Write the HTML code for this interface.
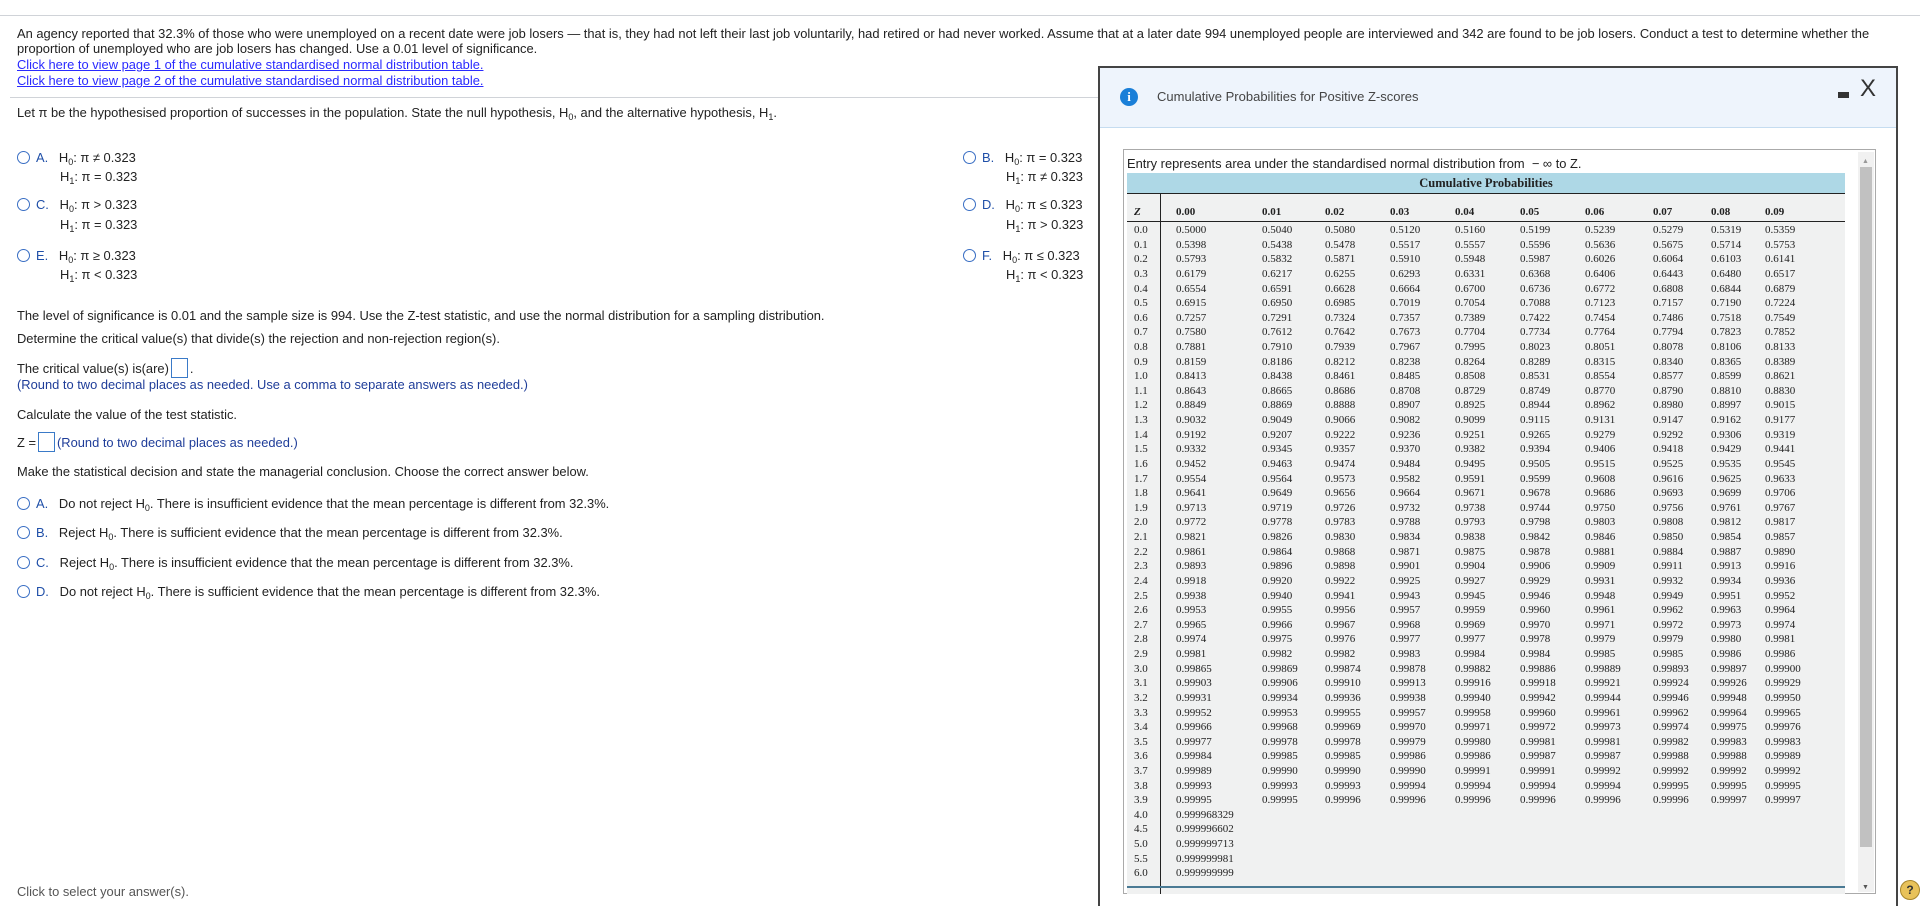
<!DOCTYPE html>
<html><head><meta charset="utf-8"><style>
body{margin:0;width:1920px;height:895px;overflow:hidden;background:#fff;font-family:"Liberation Sans",Arial,sans-serif;color:#222;position:relative}
.a{position:absolute;white-space:nowrap;font-size:12.9px;line-height:15px}
.lk{color:#2a2aff;text-decoration:underline}
.hint{color:#1f3d99}
.rad{display:inline-block;width:11px;height:11px;border:1px solid #3a6fc4;border-radius:50%;vertical-align:-2px;margin-right:6px}
.lt{color:#1f4fa8}
sub{font-size:9px;vertical-align:-3px;line-height:0}
.box{display:inline-block;width:15px;height:18px;border:1px solid #3a7ac8;vertical-align:-5px;margin:0 2px}
.r{position:absolute;left:1134px;display:grid;grid-template-columns:42px 86px 63px 65px 65px 65px 65px 68px 58px 54px 80px;height:14px;line-height:14px;font-family:"Liberation Serif",serif;font-size:11px;color:#222}
</style></head><body>
<div style="position:absolute;left:0;top:15px;width:1920px;height:1px;background:#d0d3d8"></div>
<div class="a" style="left:17px;top:26px">An agency reported that 32.3% of those who were unemployed on a recent date were job losers — that is, they had not left their last job voluntarily, had retired or had never worked. Assume that at a later date 994 unemployed people are interviewed and 342 are found to be job losers. Conduct a test to determine whether the</div>
<div class="a" style="left:17px;top:41px">proportion of unemployed who are job losers has changed. Use a 0.01 level of significance.</div>
<div class="a lk" style="left:17px;top:57px">Click here to view page 1 of the cumulative standardised normal distribution table.</div>
<div class="a lk" style="left:17px;top:73px">Click here to view page 2 of the cumulative standardised normal distribution table.</div>
<div style="position:absolute;left:10px;top:97px;width:1090px;height:1px;background:#d0d3d8"></div>
<div class="a" style="left:17px;top:105px">Let π be the hypothesised proportion of successes in the population. State the null hypothesis, H<sub>0</sub>, and the alternative hypothesis, H<sub>1</sub>.</div>

<div class="a" style="left:17px;top:150px"><span class="rad"></span><span class="lt">A.</span>&nbsp;&nbsp; H<sub>0</sub>: π ≠ 0.323</div>
<div class="a" style="left:60px;top:169px">H<sub>1</sub>: π = 0.323</div>
<div class="a" style="left:17px;top:197px"><span class="rad"></span><span class="lt">C.</span>&nbsp;&nbsp; H<sub>0</sub>: π &gt; 0.323</div>
<div class="a" style="left:60px;top:217px">H<sub>1</sub>: π = 0.323</div>
<div class="a" style="left:17px;top:248px"><span class="rad"></span><span class="lt">E.</span>&nbsp;&nbsp; H<sub>0</sub>: π ≥ 0.323</div>
<div class="a" style="left:60px;top:267px">H<sub>1</sub>: π &lt; 0.323</div>
<div class="a" style="left:963px;top:150px"><span class="rad"></span><span class="lt">B.</span>&nbsp;&nbsp; H<sub>0</sub>: π = 0.323</div>
<div class="a" style="left:1006px;top:169px">H<sub>1</sub>: π ≠ 0.323</div>
<div class="a" style="left:963px;top:197px"><span class="rad"></span><span class="lt">D.</span>&nbsp;&nbsp; H<sub>0</sub>: π ≤ 0.323</div>
<div class="a" style="left:1006px;top:217px">H<sub>1</sub>: π &gt; 0.323</div>
<div class="a" style="left:963px;top:248px"><span class="rad"></span><span class="lt">F.</span>&nbsp;&nbsp; H<sub>0</sub>: π ≤ 0.323</div>
<div class="a" style="left:1006px;top:267px">H<sub>1</sub>: π &lt; 0.323</div>

<div class="a" style="left:17px;top:308px">The level of significance is 0.01 and the sample size is 994. Use the Z-test statistic, and use the normal distribution for a sampling distribution.</div>
<div class="a" style="left:17px;top:331px">Determine the critical value(s) that divide(s) the rejection and non-rejection region(s).</div>
<div class="a" style="left:17px;top:358px">The critical value(s) is(are)<span class="box"></span>.</div>
<div class="a hint" style="left:17px;top:377px">(Round to two decimal places as needed. Use a comma to separate answers as needed.)</div>
<div class="a" style="left:17px;top:407px">Calculate the value of the test statistic.</div>
<div class="a" style="left:17px;top:432px">Z =<span class="box"></span><span class="hint">(Round to two decimal places as needed.)</span></div>
<div class="a" style="left:17px;top:464px">Make the statistical decision and state the managerial conclusion. Choose the correct answer below.</div>
<div class="a" style="left:17px;top:496px"><span class="rad"></span><span class="lt">A.</span>&nbsp;&nbsp; Do not reject H<sub>0</sub>. There is insufficient evidence that the mean percentage is different from 32.3%.</div>
<div class="a" style="left:17px;top:525px"><span class="rad"></span><span class="lt">B.</span>&nbsp;&nbsp; Reject H<sub>0</sub>. There is sufficient evidence that the mean percentage is different from 32.3%.</div>
<div class="a" style="left:17px;top:555px"><span class="rad"></span><span class="lt">C.</span>&nbsp;&nbsp; Reject H<sub>0</sub>. There is insufficient evidence that the mean percentage is different from 32.3%.</div>
<div class="a" style="left:17px;top:584px"><span class="rad"></span><span class="lt">D.</span>&nbsp;&nbsp; Do not reject H<sub>0</sub>. There is sufficient evidence that the mean percentage is different from 32.3%.</div>
<div class="a" style="left:17px;top:884px;color:#555">Click to select your answer(s).</div>

<!-- dialog -->
<div style="position:absolute;left:1098px;top:66px;width:800px;height:840px;background:#fff;border:2px solid #444;border-bottom:none;box-sizing:border-box"></div>
<div style="position:absolute;left:1100px;top:68px;width:796px;height:59px;background:#eef4fc;border-bottom:1px solid #c5dcf0"></div>
<div style="position:absolute;left:1120px;top:88px;width:18px;height:18px;border-radius:50%;background:#1a7fd8;color:#fff;font:bold 13px/18px 'Liberation Serif',serif;text-align:center">i</div>
<div class="a" style="left:1157px;top:89px;font-size:13px;color:#444">Cumulative Probabilities for Positive Z-scores</div>
<div style="position:absolute;left:1838px;top:92px;width:11px;height:6px;background:#333"></div>
<div class="a" style="left:1860px;top:77px;font-size:24px;line-height:24px;color:#333">X</div>

<div style="position:absolute;left:1123px;top:149px;width:753px;height:745px;border:1px solid #aaa;box-sizing:border-box;background:#fff"></div>
<div style="position:absolute;left:1858px;top:152px;width:16px;height:740px;background:#f1f1f1"></div>
<div style="position:absolute;left:1860px;top:167px;width:12px;height:680px;background:#c1c1c1"></div>
<div class="a" style="left:1862px;top:154px;font-size:7px;color:#999">▲</div>
<div class="a" style="left:1862px;top:880px;font-size:7px;color:#555">▼</div>
<div class="a" style="left:1127px;top:156px;font-size:12.9px;color:#222">Entry represents area under the standardised normal distribution from &nbsp;− ∞ to Z.</div>
<div style="position:absolute;left:1127px;top:173px;width:718px;height:20px;background:#aed8e6;border-bottom:1px solid #222;text-align:center;font:bold 12.5px/20px 'Liberation Serif',serif;color:#222">Cumulative Probabilities</div>
<div style="position:absolute;left:1127px;top:194px;width:718px;height:700px;background:#f0f1f1"></div>
<div style="position:absolute;left:1127px;top:221px;width:718px;height:1px;background:#222"></div>
<div style="position:absolute;left:1160px;top:194px;width:1px;height:700px;background:#222"></div>
<div style="position:absolute;left:1127px;top:886px;width:718px;height:2px;background:#4a7a94"></div>
<div class="r" style="top:205px;font-weight:bold"><span style="font-style:italic">Z</span><span>0.00</span><span>0.01</span><span>0.02</span><span>0.03</span><span>0.04</span><span>0.05</span><span>0.06</span><span>0.07</span><span>0.08</span><span>0.09</span></div>
<div id="rows"></div>
<script>
var d=`0.0 5000 5040 5080 5120 5160 5199 5239 5279 5319 5359
0.1 5398 5438 5478 5517 5557 5596 5636 5675 5714 5753
0.2 5793 5832 5871 5910 5948 5987 6026 6064 6103 6141
0.3 6179 6217 6255 6293 6331 6368 6406 6443 6480 6517
0.4 6554 6591 6628 6664 6700 6736 6772 6808 6844 6879
0.5 6915 6950 6985 7019 7054 7088 7123 7157 7190 7224
0.6 7257 7291 7324 7357 7389 7422 7454 7486 7518 7549
0.7 7580 7612 7642 7673 7704 7734 7764 7794 7823 7852
0.8 7881 7910 7939 7967 7995 8023 8051 8078 8106 8133
0.9 8159 8186 8212 8238 8264 8289 8315 8340 8365 8389
1.0 8413 8438 8461 8485 8508 8531 8554 8577 8599 8621
1.1 8643 8665 8686 8708 8729 8749 8770 8790 8810 8830
1.2 8849 8869 8888 8907 8925 8944 8962 8980 8997 9015
1.3 9032 9049 9066 9082 9099 9115 9131 9147 9162 9177
1.4 9192 9207 9222 9236 9251 9265 9279 9292 9306 9319
1.5 9332 9345 9357 9370 9382 9394 9406 9418 9429 9441
1.6 9452 9463 9474 9484 9495 9505 9515 9525 9535 9545
1.7 9554 9564 9573 9582 9591 9599 9608 9616 9625 9633
1.8 9641 9649 9656 9664 9671 9678 9686 9693 9699 9706
1.9 9713 9719 9726 9732 9738 9744 9750 9756 9761 9767
2.0 9772 9778 9783 9788 9793 9798 9803 9808 9812 9817
2.1 9821 9826 9830 9834 9838 9842 9846 9850 9854 9857
2.2 9861 9864 9868 9871 9875 9878 9881 9884 9887 9890
2.3 9893 9896 9898 9901 9904 9906 9909 9911 9913 9916
2.4 9918 9920 9922 9925 9927 9929 9931 9932 9934 9936
2.5 9938 9940 9941 9943 9945 9946 9948 9949 9951 9952
2.6 9953 9955 9956 9957 9959 9960 9961 9962 9963 9964
2.7 9965 9966 9967 9968 9969 9970 9971 9972 9973 9974
2.8 9974 9975 9976 9977 9977 9978 9979 9979 9980 9981
2.9 9981 9982 9982 9983 9984 9984 9985 9985 9986 9986
3.0 99865 99869 99874 99878 99882 99886 99889 99893 99897 99900
3.1 99903 99906 99910 99913 99916 99918 99921 99924 99926 99929
3.2 99931 99934 99936 99938 99940 99942 99944 99946 99948 99950
3.3 99952 99953 99955 99957 99958 99960 99961 99962 99964 99965
3.4 99966 99968 99969 99970 99971 99972 99973 99974 99975 99976
3.5 99977 99978 99978 99979 99980 99981 99981 99982 99983 99983
3.6 99984 99985 99985 99986 99986 99987 99987 99988 99988 99989
3.7 99989 99990 99990 99990 99991 99991 99992 99992 99992 99992
3.8 99993 99993 99993 99994 99994 99994 99994 99995 99995 99995
3.9 99995 99995 99996 99996 99996 99996 99996 99996 99997 99997
4.0 999968329
4.5 999996602
5.0 999999713
5.5 999999981
6.0 999999999`.split("\n");
var h="";d.forEach(function(l,i){var p=l.split(" ");h+='<div class="r" style="top:'+(223+i*14.62).toFixed(1)+'px">';p.forEach(function(v,j){h+='<span>'+(j?'0.'+v:v)+'</span>'});h+='</div>'});
document.getElementById("rows").innerHTML=h;
</script>
<div style="position:absolute;left:1900px;top:880px;width:18px;height:18px;border-radius:50%;background:#e8c25a;border:1px solid #a8862a;font:bold 12px/18px 'Liberation Sans',sans-serif;text-align:center;color:#333">?</div>
</body></html>
